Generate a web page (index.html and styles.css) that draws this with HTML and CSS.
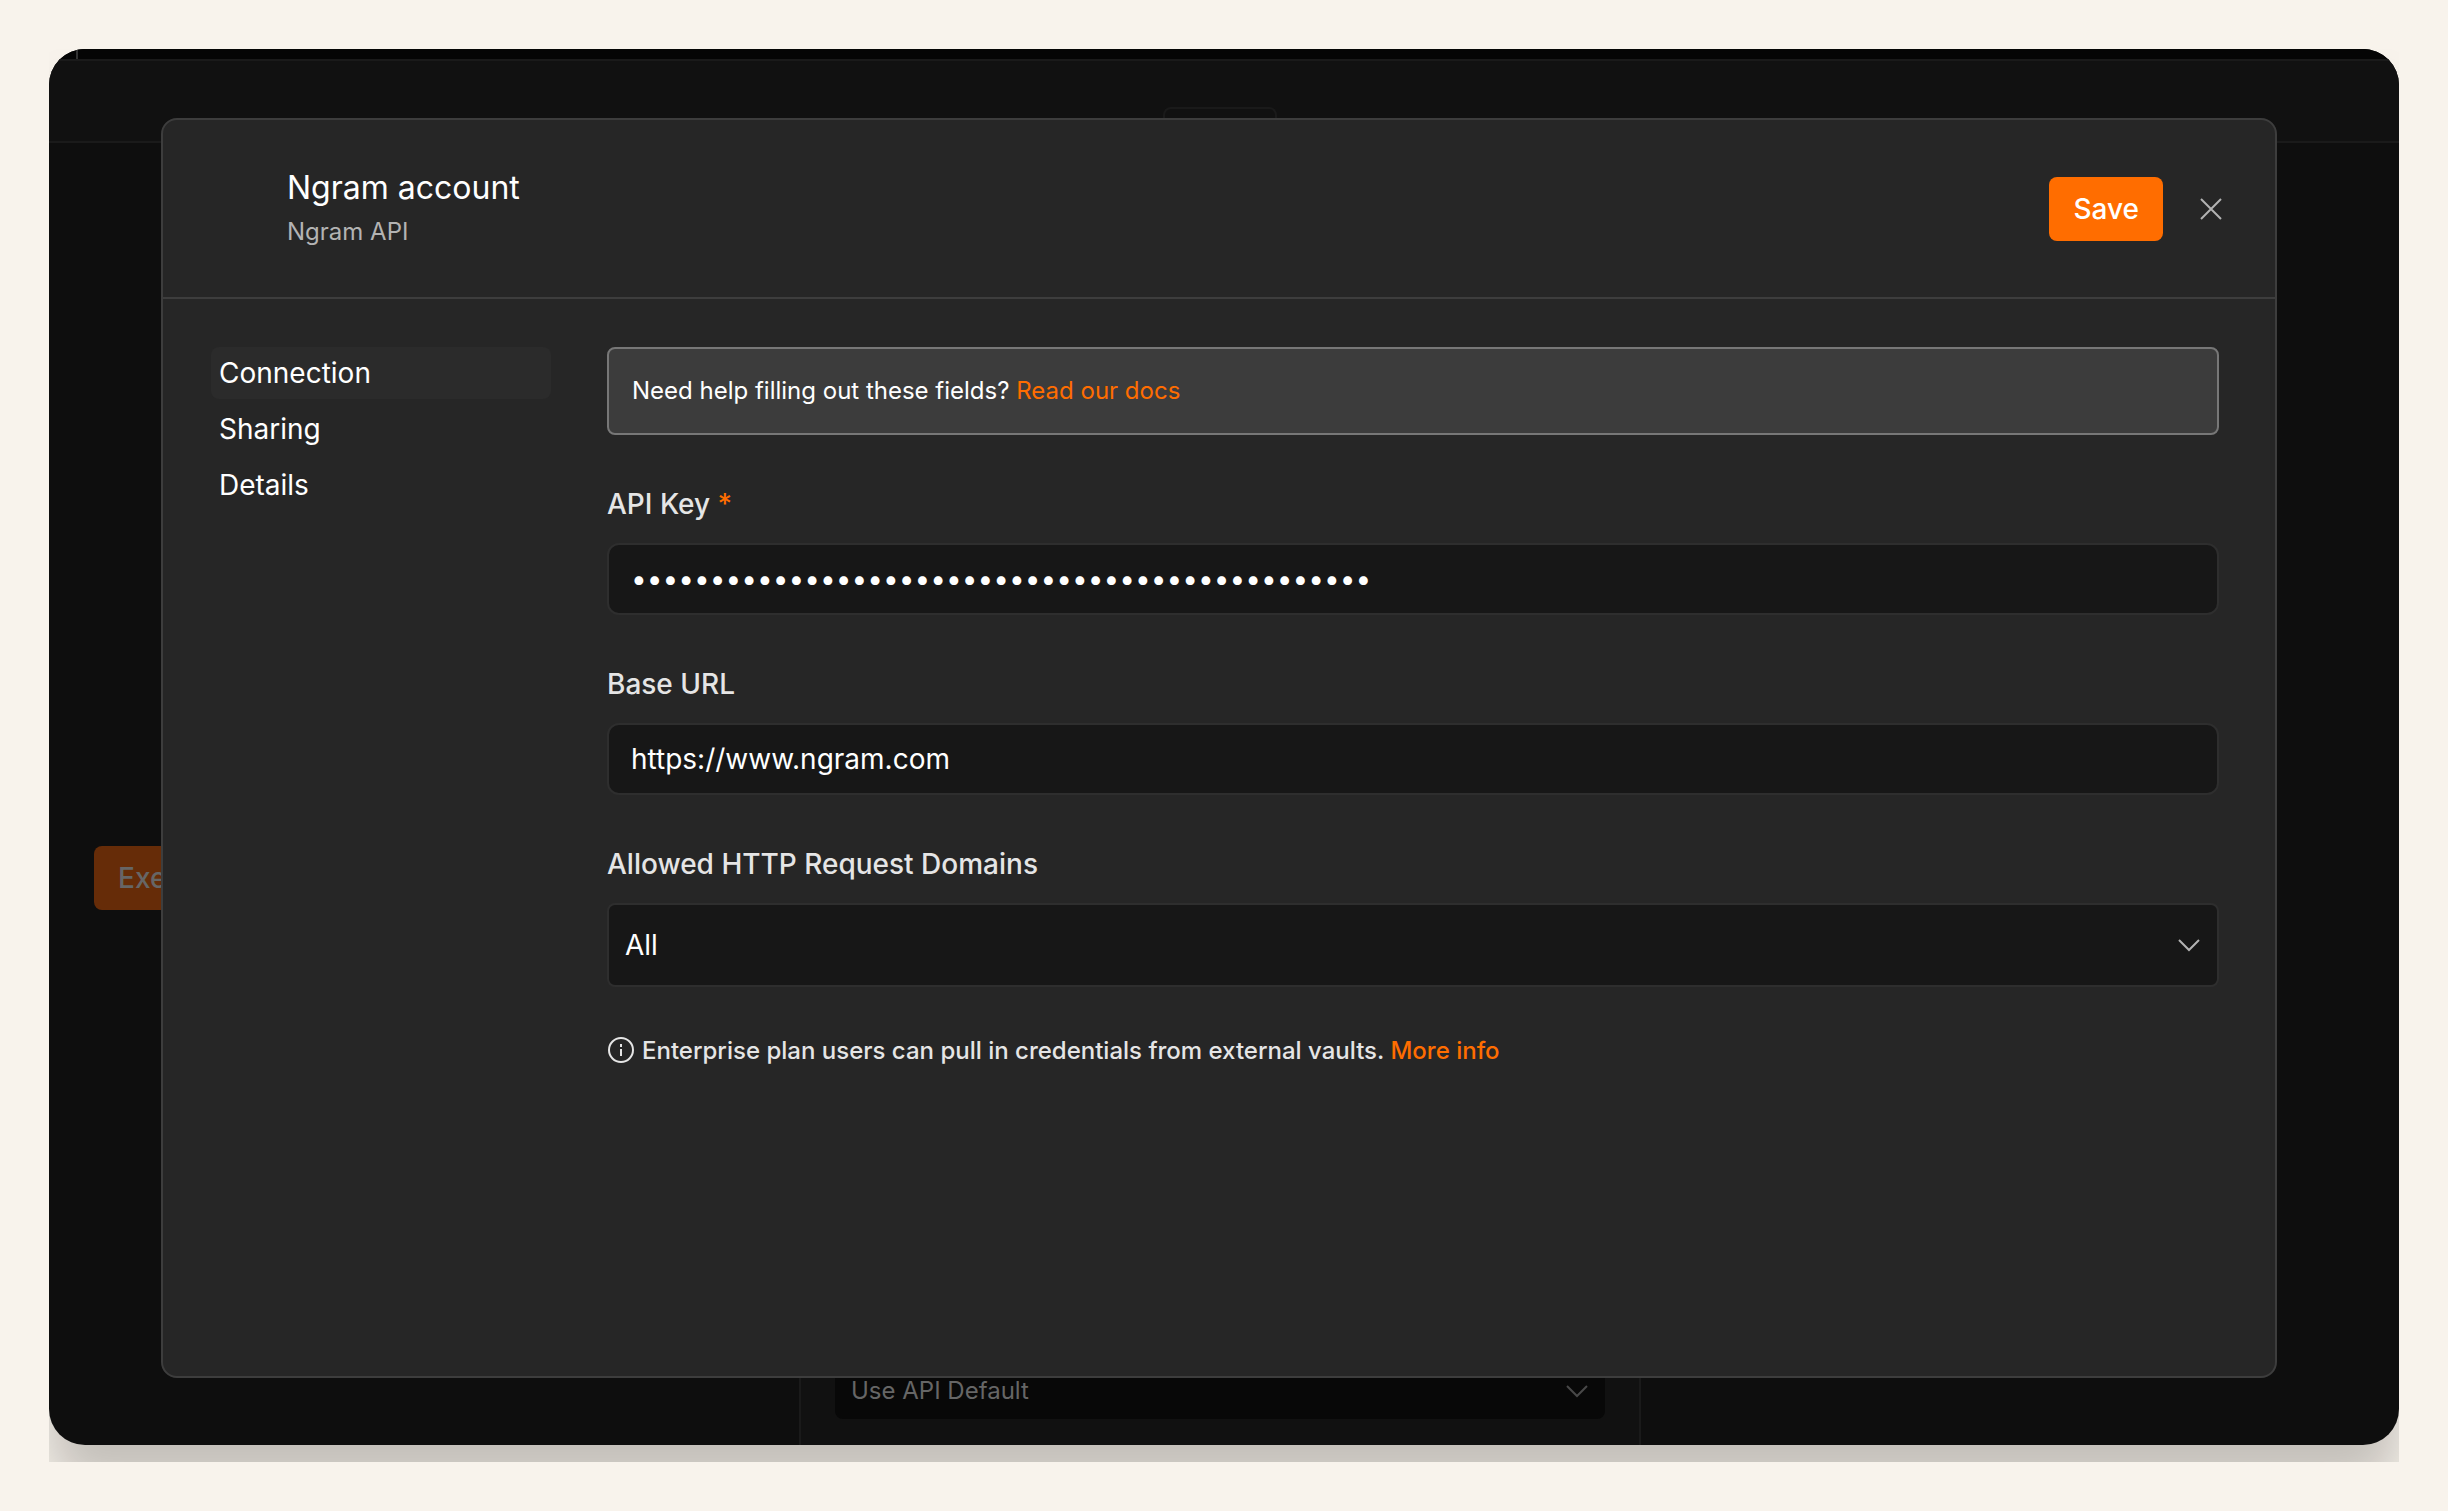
FILE: index.html
```html
<!DOCTYPE html>
<html lang="en">
<head>
  <meta charset="UTF-8">
  <meta name="viewport" content="width=device-width, initial-scale=1.0">
  <title>Ngram account</title>
  <link rel="stylesheet" href="styles.css">
</head>
<body>
  <div class="frame">
    <div class="stage">

      <div class="editor">
        <div class="editor-strip"></div>
        <div class="editor-header">
          <div class="editor-tabs"></div>
        </div>
        <div class="editor-main">
          <div class="editor-side">
            <button type="button" class="btn btn-dimmed">Execute step</button>
          </div>
          <div class="editor-panel">
            <select class="editor-select" aria-label="Response format">
              <option>Use API Default</option>
            </select>
            <svg class="chevron" viewBox="0 0 24 24"><path d="M2 7l10 10L22 7"/></svg>
          </div>
        </div>
      </div>

      <div class="modal" role="dialog" aria-labelledby="modal-title">
        <div class="modal-header">
          <div class="modal-heading">
            <h1 id="modal-title">Ngram account</h1>
            <p>Ngram API</p>
          </div>
          <button type="button" class="btn">Save</button>
          <button type="button" class="close" aria-label="Close">
            <svg viewBox="0 0 24 24"><path d="M2 2l20 20M22 2L2 22"/></svg>
          </button>
        </div>

        <div class="modal-body">
          <nav class="menu">
            <a href="#connection" class="active">Connection</a>
            <a href="#sharing">Sharing</a>
            <a href="#details">Details</a>
          </nav>

          <form class="form">
            <div class="notice">Need help filling out these fields? <a href="#docs">Read our docs</a></div>

            <div class="field">
              <label for="api-key">API Key <span class="required">*</span></label>
              <input type="password" id="api-key" value="00000000000000000000000000000000000000000000000">
            </div>

            <div class="field">
              <label for="base-url">Base URL</label>
              <input type="text" id="base-url" value="https://www.ngram.com">
            </div>

            <div class="field">
              <label for="domains">Allowed HTTP Request Domains</label>
              <div class="select">
                <select id="domains">
                  <option>All</option>
                </select>
                <svg class="chevron" viewBox="0 0 24 24"><path d="M2 7l10 10L22 7"/></svg>
              </div>
            </div>

            <div class="hint">
              <svg class="info" viewBox="0 0 28 28">
                <circle cx="14" cy="13" r="12"/>
                <path d="M14 12v7"/>
                <path d="M14 7v3"/>
              </svg>
              <span>Enterprise plan users can pull in credentials from external vaults. <a href="#more">More info</a></span>
            </div>
          </form>
        </div>
      </div>

    </div>
  </div>
</body>
</html>
```
FILE: styles.css
```css
:root {
  --page-bg: #f8f3ec;
  --editor-bg: #0e0e0e;
  --editor-panel: #111111;
  --editor-line: #1a1a1a;
  --modal-bg: #262626;
  --modal-line: #3d3d3d;
  --input-bg: #171717;
  --input-line: #2e2e2e;
  --orange: #ff6d00;
  --text: #ffffff;
  --text-label: #e5e5e5;
  --text-muted: #b3b3b3;
}
* { box-sizing: border-box; margin: 0; padding: 0; }
body {
  min-height: 100vh;
  display: flex;
  padding: 49px;
  background: var(--page-bg);
  color: var(--text);
  font-family: Inter, "Liberation Sans", sans-serif;
  font-size: 28px;
  line-height: 38px;
}
button, input, select { font: inherit; color: inherit; }
a { color: var(--orange); text-decoration: none; }
svg { fill: none; stroke: currentColor; stroke-width: 2; }

/* the shadow is cut off at the frame's edges */
.frame {
  flex: 1;
  display: flex;
  padding-bottom: 17px;
  overflow: hidden;
}
.stage {
  flex: 1;
  display: grid;
  border-radius: 36px;
  background: var(--editor-bg);
  box-shadow: 0 42px 50px rgba(0, 0, 0, 0.21);
}

/* dimmed editor, under the modal */
.editor {
  grid-area: 1 / 1;
  display: flex;
  flex-direction: column;
  border-radius: 36px;
  overflow: hidden;
  color: #666666;
}
.editor-strip {
  height: 10px;
  margin-left: 27px;
  border-left: 2px solid #333333;
  background: #050505;
  box-shadow: -27px 0 #050505;
}
.editor-header {
  height: 84px;
  display: flex;
  justify-content: center;
  align-items: flex-end;
  padding-right: 8px;
  background: var(--editor-panel);
  border: solid var(--editor-line);
  border-width: 2px 0;
}
.editor-tabs {
  width: 114px;
  height: 34px;
  border: 2px solid var(--editor-line);
  border-bottom: none;
  border-radius: 8px 8px 0 0;
}
.editor-main {
  flex: 1;
  display: grid;
  grid-template-columns: 1fr 842px 1fr;
  padding-right: 8px;
}
.editor-side {
  display: flex;
  align-items: center;
  padding: 168px 0 0 45px;
}
.editor-panel {
  position: relative;
  display: flex;
  align-items: flex-end;
  padding: 0 34px 26px;
  background: var(--editor-panel);
  border: solid var(--editor-line);
  border-width: 0 2px;
}
.editor-select {
  appearance: none;
  width: 100%;
  height: 56px;
  padding: 0 16px;
  border: none;
  border-radius: 8px;
  background: #080808;
  font-size: 24px;
}
.editor-panel .chevron {
  position: absolute;
  right: 50px;
  bottom: 42px;
  color: #484848;
}

.modal {
  grid-area: 1 / 1;
  z-index: 1;
  display: flex;
  flex-direction: column;
  margin: 69px 122px 67px 112px;
  background: var(--modal-bg);
  border: 2px solid var(--modal-line);
  border-radius: 16px;
}
.modal-header {
  display: flex;
  align-items: center;
  padding: 48px 48px 48px 124px;
  border-bottom: 2px solid var(--modal-line);
}
.modal-heading { flex: 1; }
.modal-heading h1 {
  font-size: 32px;
  font-weight: 400;
  line-height: 40px;
}
.modal-heading p {
  padding-top: 7px;
  color: var(--text-muted);
  font-size: 24px;
  line-height: 34px;
}
.btn {
  height: 64px;
  padding: 0 24px;
  border: none;
  border-radius: 8px;
  background: var(--orange);
  font-weight: 500;
  cursor: pointer;
}
.btn-dimmed { background: #662c08; }
.close {
  display: flex;
  margin-left: 32px;
  padding: 4px;
  border: none;
  background: none;
  color: var(--text-muted);
  cursor: pointer;
}
.close svg { width: 24px; height: 24px; }

.modal-body {
  flex: 1;
  display: grid;
  grid-template-columns: 340px 1fr;
  gap: 56px;
  padding: 48px 56px 48px 48px;
}
.menu {
  display: flex;
  flex-direction: column;
  gap: 4px;
}
.menu a {
  padding: 7px 8px;
  border-radius: 8px;
  color: var(--text);
}
.menu .active { background: #2b2b2b; }

.form {
  display: flex;
  flex-direction: column;
  gap: 50px;
}
.notice {
  padding: 23px;
  border: 2px solid #777777;
  border-radius: 8px;
  background: #3c3c3c;
  font-size: 24px;
}
.field {
  display: flex;
  flex-direction: column;
  gap: 20px;
}
.field label {
  color: var(--text-label);
  font-weight: 500;
}
.required { color: var(--orange); }
.field input {
  width: 100%;
  height: 72px;
  padding: 0 22px;
  border: 2px solid var(--input-line);
  border-radius: 12px;
  background: var(--input-bg);
}
.select {
  position: relative;
  display: flex;
}
.select select {
  appearance: none;
  width: 100%;
  height: 84px;
  padding: 0 16px;
  border: 2px solid var(--input-line);
  border-radius: 8px;
  background: var(--input-bg);
}
.chevron {
  width: 24px;
  height: 24px;
  pointer-events: none;
}
.select .chevron {
  position: absolute;
  right: 18px;
  top: 30px;
  color: var(--text-muted);
}
.hint {
  display: flex;
  align-items: center;
  gap: 7px;
  color: var(--text-label);
  font-size: 24px;
  font-weight: 500;
  line-height: 24px;
}
.info { width: 28px; height: 28px; }
```
